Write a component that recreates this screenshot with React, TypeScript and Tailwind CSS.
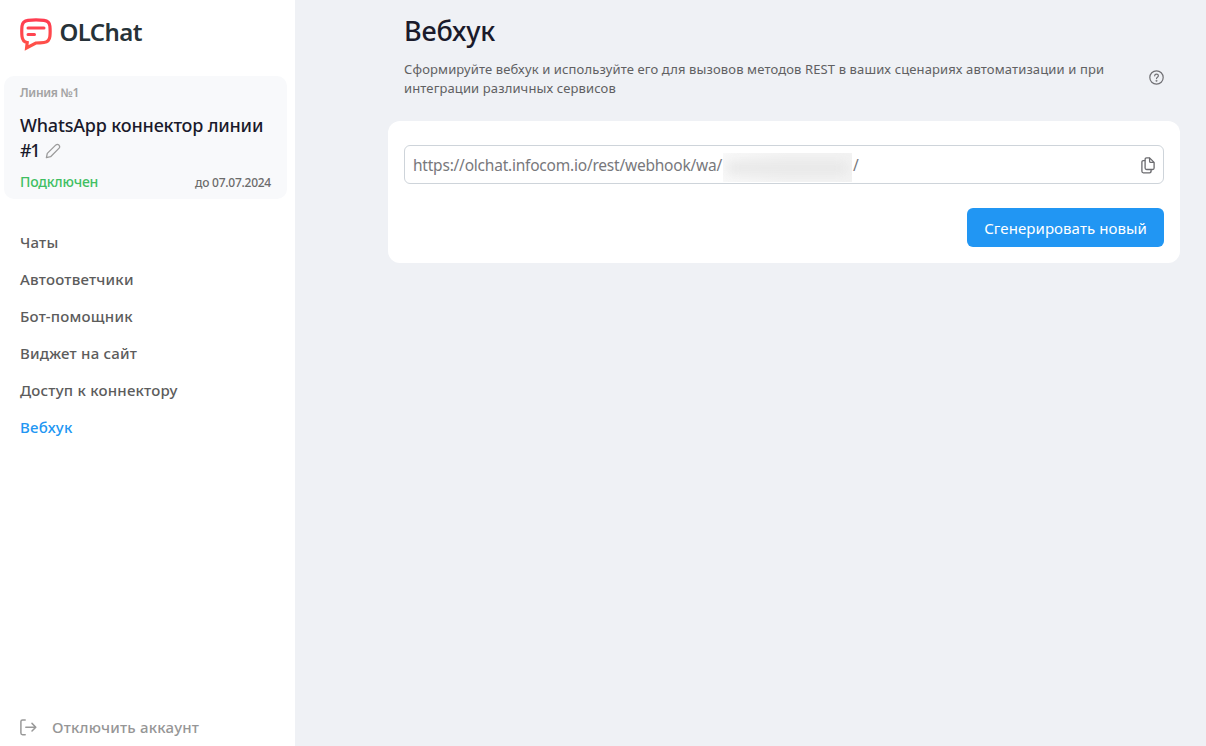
const navItems = [
  "Чаты",
  "Автоответчики",
  "Бот-помощник",
  "Виджет на сайт",
  "Доступ к коннектору",
  "Вебхук",
];

function Logo() {
  return (
    <svg width="32" height="33" viewBox="0 0 32 33" fill="none">
      <defs>
        <linearGradient id="logo" x1="0" y1="0" x2="0" y2="1">
          <stop offset="0" stopColor="#ff3d51" />
          <stop offset="1" stopColor="#ff5348" />
        </linearGradient>
      </defs>
      <g stroke="url(#logo)" strokeLinecap="round" strokeLinejoin="miter">
        <path
          strokeWidth="3.2"
          d="M8 2.4Q16 1.3 24 2.4C28 2.9 29.6 4.6 29.9 8.2Q30.4 13.6 29.9 18.4C29.5 22.4 27.8 24 24 24.5Q20 25 15.8 25L6.6 30L7.2 24.5C3.8 24 2.4 22.2 2 18.4Q1.5 13.6 2 8.2C2.4 4.6 4 2.9 8 2.4Z"
        />
      </g>
      <path stroke="#ff4450" strokeWidth="3" strokeLinecap="round" d="M8 10H24M8 16.5H14.5" />
    </svg>
  );
}

function PencilIcon() {
  return (
    <svg width="16" height="16" viewBox="0 0 16 16" fill="none" stroke="#9b9b9b" strokeWidth="1.3" strokeLinejoin="round">
      <path d="M1.4 14.6L2.3 10.4L10.9 1.9Q12.4 .7 13.9 2.1Q15.3 3.6 14.1 5.1L5.6 13.7Z" />
    </svg>
  );
}

function LogoutIcon() {
  return (
    <svg width="17" height="17" viewBox="0 0 17 17" fill="none" stroke="#999" strokeWidth="1.5" strokeLinecap="round" strokeLinejoin="round">
      <path d="M5.2 .9H2.6Q.9 .9 .9 2.6V14Q.9 15.7 2.6 15.7H5.2M5.8 8.2H15.6M12 4.4L15.8 8.2L12 12" />
    </svg>
  );
}

function HelpIcon() {
  return (
    <svg width="15" height="15" viewBox="0 0 15 15" fill="none" stroke="#707074" strokeWidth="1.2" strokeLinecap="round" strokeLinejoin="round">
      <circle cx="7.5" cy="7.5" r="6.7" />
      <path d="M5.7 5.8C5.7 4.8 6.4 4.1 7.5 4.1S9.4 4.8 9.4 5.8C9.4 7.1 7.5 7.2 7.5 8.5" />
      <circle cx="7.5" cy="10.7" r=".35" />
    </svg>
  );
}

function CopyIcon() {
  return (
    <svg width="14" height="17" viewBox="0 0 14 17" fill="none" stroke="#6b6b6f" strokeWidth="1.3" strokeLinecap="round" strokeLinejoin="round">
      <path d="M8.4 .9H5.6Q4.1 .9 4.1 2.4V11Q4.1 12.5 5.6 12.5H11.6Q13.1 12.5 13.1 11V5.4L8.6 .9V4.2Q8.6 5.4 9.8 5.4H13" />
      <path d="M3.8 3.6H2.4Q.9 3.6 .9 5.1V14.3Q.9 15.8 2.4 15.8H8.6Q10 15.8 10.1 14.4V13" />
    </svg>
  );
}

export default function App() {
  return (
    <div className="flex h-screen overflow-hidden bg-[#eff1f5] font-['Noto_Sans',sans-serif]">
      <aside className="flex w-[295px] shrink-0 flex-col bg-white">
        <div className="flex h-[50px] items-start gap-[7.5px] pt-[18px] pl-5">
          <Logo />
          <span className="-mt-[2px] text-2xl leading-8 font-semibold tracking-[-0.6px] text-[#263238]">OLChat</span>
        </div>

        <section className="mt-[26px] ml-1 h-[123px] w-[283px] rounded-[10px] bg-[#f8f9fb] px-4 pt-2">
          <p className="text-xs leading-[18px] font-semibold tracking-[-0.3px] text-[#a3a3a3]">Линия №1</p>
          <h2 className="mt-[11px] text-lg leading-[25px] font-medium tracking-[-0.18px] whitespace-nowrap text-[#1a1a2b]">
            WhatsApp коннектор линии
            <br />
            <span className="inline-flex items-center gap-[6px]">
              <span className="tracking-[-1.3px]">#1</span> <PencilIcon />
            </span>
          </h2>
          <div className="mt-[9px] flex items-center justify-between leading-5 whitespace-nowrap">
            <span className="-mt-[2px] text-sm leading-5 font-medium tracking-[-0.18px] text-[#3fbf62]">Подключен</span>
            <span className="text-xs leading-[22px] font-medium tracking-[-0.25px] text-[#6b6b6b]">до 07.07.2024</span>
          </div>
        </section>

        <nav className="mt-[25px] flex flex-col pl-5 text-[15px] leading-[37px] font-medium tracking-[0.22px]">
          {navItems.map((item) => (
            <a key={item} className={item === "Вебхук" ? "h-[37px] text-[#2196f3]" : "h-[37px] text-[#5c5c5c]"}>
              {item}
            </a>
          ))}
        </nav>

        <button className="mt-auto mb-[7px] flex items-center gap-[15px] pl-5 text-[15px] leading-6 font-medium tracking-[0.2px] text-[#969696]">
          <LogoutIcon />
          Отключить аккаунт
        </button>
      </aside>

      <main className="ml-[93px] flex w-[792px] flex-col">
        <header className="flex h-[121px] px-4">
          <div className="flex flex-col">
            <h1 className="mt-[13px] text-[27px] leading-9 font-medium tracking-[-0.2px] text-[#1a1a2b]">Вебхук</h1>
            <p className="mt-[11px] w-[712px] text-[13px] leading-[19px] tracking-[0.125px] text-[#606062]">
              Сформируйте вебхук и используйте его для вызовов методов REST в ваших сценариях автоматизации и при
              <br />
              интеграции различных сервисов
            </p>
          </div>
          <div className="mt-[70px] ml-auto">
            <HelpIcon />
          </div>
        </header>

        <section className="flex h-[142px] flex-col items-end rounded-xl bg-white px-4 pt-6">
          <div className="flex h-[39px] w-full items-center rounded-md border border-[#ced4da] pt-px pr-[8.5px] pl-[8px] text-[15.5px] text-[#78787c]">
            <span className="w-[309px] pt-px tracking-[-0.22px] whitespace-nowrap">https://olchat.infocom.io/rest/webhook/wa/</span>
            <span className="mt-[5px] ml-[1px] flex h-[29px] w-[129px] items-center overflow-hidden bg-linear-to-r from-[#f9f9f9] via-[#f3f3f3] to-[#f3f3f3] px-1">
              <span className="h-3 w-full bg-[#e6e6e6] blur-[6px]" />
            </span>
            <span className="pt-px pl-px">/</span>
            <span className="ml-auto">
              <CopyIcon />
            </span>
          </div>
          <button className="mt-6 h-[39px] w-[197px] rounded-md bg-[#2196f3] pt-px text-[15px] tracking-[0.08px] text-white">
            Сгенерировать новый
          </button>
        </section>
      </main>
    </div>
  );
}
